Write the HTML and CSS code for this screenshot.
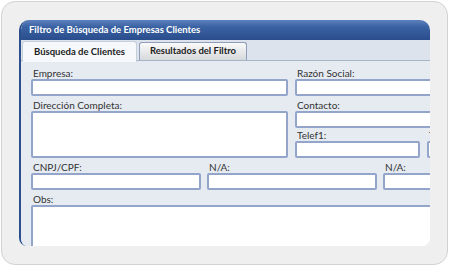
FILE: index.html
```html
<!DOCTYPE html>
<html lang="es">
<head>
    <meta charset="UTF-8">
    <title>Filtro de Búsqueda</title>
    <link rel="stylesheet" href="styles.css">
</head>
<body>
    <div class="frame">
        <div class="panel">
            <div class="panel-title">Filtro de Búsqueda de Empresas Clientes</div>

            <div class="tabs">
                <div class="tab active">Búsqueda de Clientes</div>
                <div class="tab">Resultados del Filtro</div>
            </div>

            <div class="form">
                <div class="row">
                    <div class="field wide">
                        <label>Empresa:</label>
                        <input type="text">
                    </div>
                    <div class="field right">
                        <label>Razón Social:</label>
                        <input type="text">
                    </div>
                </div>

                <div class="row">
                    <div class="field wide">
                        <label>Dirección Completa:</label>
                        <textarea class="address"></textarea>
                    </div>
                    <div class="right">
                        <div class="field">
                            <label>Contacto:</label>
                            <input type="text">
                        </div>
                        <div class="row">
                            <div class="field tel">
                                <label class="short">Telef1:</label>
                                <input type="text">
                            </div>
                            <div class="field tel">
                                <label class="short">Telef2:</label>
                                <input type="text">
                            </div>
                        </div>
                    </div>
                </div>

                <div class="row narrow-gap">
                    <div class="field third">
                        <label>CNPJ/CPF:</label>
                        <input type="text">
                    </div>
                    <div class="field third">
                        <label>N/A:</label>
                        <input type="text">
                    </div>
                    <div class="field third">
                        <label>N/A:</label>
                        <input type="text">
                    </div>
                </div>

                <div class="row">
                    <div class="field full">
                        <label>Obs:</label>
                        <textarea class="obs"></textarea>
                    </div>
                </div>
            </div>
        </div>
    </div>
</body>
</html>
```

FILE: styles.css
```css
body {
    margin: 0;
    background: #fff;
    font-family: Lato, "Liberation Sans", sans-serif;
    color: #333;
}

.frame {
    box-sizing: border-box;
    width: 447px;
    height: 264px;
    margin: 1px;
    padding: 18px 0 0 17px;
    background: #efefef;
    border: 1px solid #d2d2d2;
    border-radius: 14px;
}

.panel {
    width: 411px;
    height: 226px;
    box-sizing: border-box;
    overflow: hidden;
    background: #fff;
    border-left: 2px solid #2c4f8d;
    border-radius: 10px 10px 8px 8px;
}

.panel-title {
    height: 20px;
    line-height: 19px;
    padding-left: 8px;
    color: #fff;
    font-size: 9.5px;
    font-weight: 700;
    background: linear-gradient(#5c80bc, #3a62a3 35%, #2a4d8c);
}

.tabs {
    display: flex;
    align-items: flex-start;
    height: 21px;
    box-sizing: border-box;
    padding: 1px 0 0 1px;
    background: #dde3ec;
    border-bottom: 1px solid #a7b4ca;
}

.tab {
    box-sizing: border-box;
    height: 18px;
    margin-top: 1px;
    margin-left: 2px;
    width: 108px;
    line-height: 16px;
    text-align: center;
    font-size: 9.5px;
    font-weight: 700;
    color: #222;
    background: linear-gradient(#fafafa, #d6d8db);
    border: 1px solid #8d9dba;
    border-bottom: none;
    border-radius: 3px 3px 0 0;
}

.tab.active {
    width: 115px;
    height: 21px;
    margin: 0;
    line-height: 20px;
    background: #f6f8fb;
    border-color: #c5cedb;
}

.form {
    background: #e6ebf2;
    padding: 3px 0 0 10px;
}

.row {
    display: flex;
    gap: 7px;
}

.row.narrow-gap {
    gap: 6px;
}

.field {
    display: flex;
    flex-direction: column;
    flex-shrink: 0;
}

.field label {
    box-sizing: border-box;
    height: 15px;
    padding: 3px 0 0 2px;
    line-height: 12px;
    font-size: 10px;
    color: #333;
}

.field label.short {
    height: 13px;
    padding-top: 1px;
}

.field input,
.field textarea {
    box-sizing: border-box;
    height: 17px;
    margin: 0;
    padding: 0;
    background: #fff;
    border: 2px solid #93a5cb;
    border-radius: 2px;
    resize: none;
}

.wide {
    width: 257px;
}

.right {
    width: 300px;
    flex-shrink: 0;
}

.tel {
    width: 125px;
}

.third {
    width: 170px;
}

.full {
    width: 520px;
}

.field textarea.address {
    height: 47px;
}

.field textarea.obs {
    height: 60px;
}
```
